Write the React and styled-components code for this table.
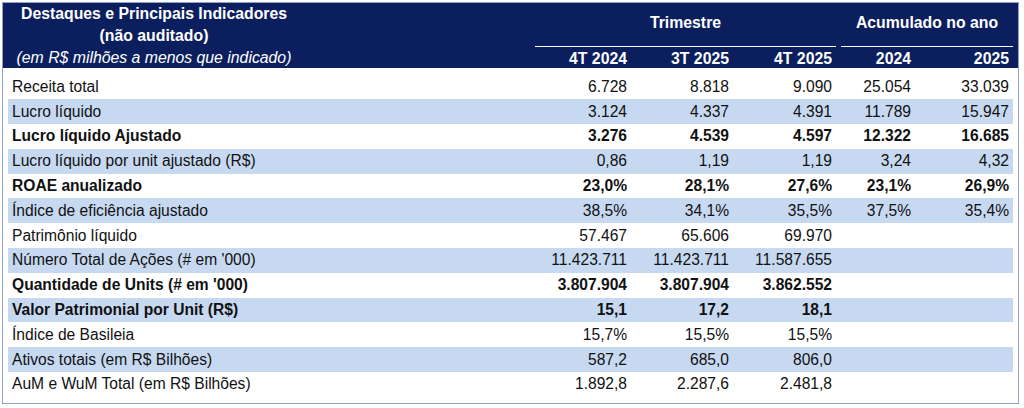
import React from 'react';
import styled, { createGlobalStyle } from 'styled-components';

const GlobalStyle = createGlobalStyle`
  html, body {
    margin: 0;
    padding: 0;
    background: #ffffff;
  }
  body {
    font-family: "Liberation Sans", Arial, sans-serif;
    color: #111111;
  }
`;

const cols = '527px 96px 102px 103px 79px 98px';

const Frame = styled.div`
  margin: 2px;
  width: 1015px;
  border: 1px solid #8ea2cb;
  background: #ffffff;
`;

const Header = styled.div`
  background: #0b1f5e;
  color: #ffffff;
  height: 65px;
  padding: 0 5px;
  display: grid;
  grid-template-columns: ${cols};
  grid-template-rows: 44px 21px;
  font-weight: 700;
  font-size: 15.8px;
`;

const TitleBlock = styled.div`
  grid-row: 1 / span 2;
  width: 292px;
  display: flex;
  flex-direction: column;
  align-items: center;
  padding-top: 0;
  line-height: 22px;
`;

const Subtitle = styled.span`
  font-weight: 400;
  font-style: italic;
`;

const GroupHead = styled.div`
  grid-column: ${(p) => p.$span};
  margin-left: ${(p) => p.$inset || 0}px;
  border-bottom: 1.5px solid #ffffff;
  display: flex;
  align-items: center;
  justify-content: center;
  padding-bottom: 3px;
`;

const ColHead = styled.div`
  text-align: right;
  padding-right: 4px;
  padding-top: 4px;
  line-height: 16px;
`;

const Body = styled.div`
  padding: 6.5px 5px 6px;
`;

const Row = styled.div`
  display: grid;
  grid-template-columns: ${cols};
  height: 24.8px;
  align-items: center;
  background: ${(p) => (p.$striped ? '#c6d9f1' : 'transparent')};
  font-weight: ${(p) => (p.$bold ? 700 : 400)};
  font-size: 15.6px;
`;

const Label = styled.div`
  padding-left: 4px;
  white-space: nowrap;
`;

const Cell = styled.div`
  text-align: right;
  padding-right: 4px;
  white-space: nowrap;
`;

const rows = [
  ['Receita total', ['6.728', '8.818', '9.090', '25.054', '33.039']],
  ['Lucro líquido', ['3.124', '4.337', '4.391', '11.789', '15.947']],
  ['Lucro líquido Ajustado', ['3.276', '4.539', '4.597', '12.322', '16.685'], true],
  ['Lucro líquido por unit ajustado (R$)', ['0,86', '1,19', '1,19', '3,24', '4,32']],
  ['ROAE anualizado', ['23,0%', '28,1%', '27,6%', '23,1%', '26,9%'], true],
  ['Índice de eficiência ajustado', ['38,5%', '34,1%', '35,5%', '37,5%', '35,4%']],
  ['Patrimônio líquido', ['57.467', '65.606', '69.970', '', '']],
  ["Número Total de Ações (# em '000)", ['11.423.711', '11.423.711', '11.587.655', '', '']],
  ["Quantidade de Units (# em '000)", ['3.807.904', '3.807.904', '3.862.552', '', ''], true],
  ['Valor Patrimonial por Unit (R$)', ['15,1', '17,2', '18,1', '', ''], true],
  ['Índice de Basileia', ['15,7%', '15,5%', '15,5%', '', '']],
  ['Ativos totais (em R$ Bilhões)', ['587,2', '685,0', '806,0', '', '']],
  ['AuM e WuM Total (em R$ Bilhões)', ['1.892,8', '2.287,6', '2.481,8', '', '']],
];

export default function App() {
  return (
    <>
      <GlobalStyle />
      <Frame>
        <Header>
          <TitleBlock>
            <span>Destaques e Principais Indicadores</span>
            <span>(não auditado)</span>
            <Subtitle>(em R$ milhões a menos que indicado)</Subtitle>
          </TitleBlock>
          <GroupHead $span="2 / span 3">Trimestre</GroupHead>
          <GroupHead $span="5 / span 2" $inset={5}>Acumulado no ano</GroupHead>
          <ColHead>4T 2024</ColHead>
          <ColHead>3T 2025</ColHead>
          <ColHead>4T 2025</ColHead>
          <ColHead>2024</ColHead>
          <ColHead>2025</ColHead>
        </Header>
        <Body>
          {rows.map(([label, values, bold], i) => (
            <Row key={label} $striped={i % 2 === 1} $bold={bold}>
              <Label>{label}</Label>
              {values.map((v, j) => (
                <Cell key={j}>{v}</Cell>
              ))}
            </Row>
          ))}
        </Body>
      </Frame>
    </>
  );
}
